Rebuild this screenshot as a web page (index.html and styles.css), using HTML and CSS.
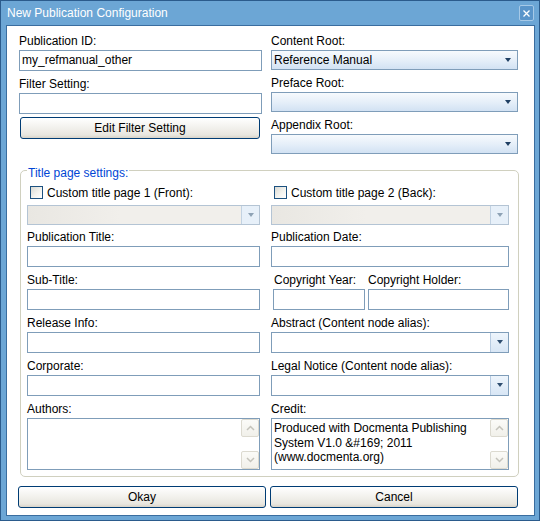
FILE: index.html
```html
<!DOCTYPE html>
<html>
<head>
<meta charset="utf-8">
<title>New Publication Configuration</title>
<link rel="stylesheet" href="styles.css">
</head>
<body>
<div class="window">
  <div class="titlebar">
    <span class="title">New Publication Configuration</span>
    <span class="close"><svg width="7" height="7" viewBox="0 0 7 7"><path d="M0.5 0.5 L6.5 6.5 M6.5 0.5 L0.5 6.5" stroke="#fff" stroke-width="1.3" fill="none"/></svg></span>
  </div>
  <div class="content">
    <div class="top">
      <div class="col">
        <div class="lbl">Publication ID:</div>
        <div class="field">my_refmanual_other</div>
        <div class="lbl">Filter Setting:</div>
        <div class="field"></div>
        <div class="btn edit">Edit Filter Setting</div>
      </div>
      <div class="col">
        <div class="lbl">Content Root:</div>
        <div class="combo blue"><span class="ctext">Reference Manual</span><span class="abtn"><i class="tri"></i></span></div>
        <div class="lbl">Preface Root:</div>
        <div class="combo blue"><span class="ctext"></span><span class="abtn"><i class="tri"></i></span></div>
        <div class="lbl">Appendix Root:</div>
        <div class="combo blue"><span class="ctext"></span><span class="abtn"><i class="tri"></i></span></div>
      </div>
    </div>

    <div class="group">
      <span class="legend">Title page settings:</span>
      <div class="gcols">
        <div class="col">
          <div class="chk"><span class="cbox"></span><span>Custom title page 1 (Front):</span></div>
          <div class="combo dis"><span class="ctext"></span><span class="abtn"><i class="tri"></i></span></div>
          <div class="lbl">Publication Title:</div>
          <div class="field"></div>
          <div class="lbl">Sub-Title:</div>
          <div class="field"></div>
          <div class="lbl">Release Info:</div>
          <div class="field"></div>
          <div class="lbl">Corporate:</div>
          <div class="field"></div>
          <div class="lbl">Authors:</div>
          <div class="tarea">
            <div class="ttext"></div>
            <div class="sbar">
              <span class="sbtn"><svg width="9" height="6" viewBox="0 0 9 6"><polyline points="1,5 4.5,1.5 8,5" fill="none" stroke="#c4c3bb" stroke-width="1.5"/></svg></span>
              <span class="sbtn"><svg width="9" height="6" viewBox="0 0 9 6"><polyline points="1,1 4.5,4.5 8,1" fill="none" stroke="#c4c3bb" stroke-width="1.5"/></svg></span>
            </div>
          </div>
        </div>
        <div class="col">
          <div class="chk"><span class="cbox"></span><span>Custom title page 2 (Back):</span></div>
          <div class="combo dis"><span class="ctext"></span><span class="abtn"><i class="tri"></i></span></div>
          <div class="lbl">Publication Date:</div>
          <div class="field"></div>
          <div class="copy">
            <div class="col">
              <div class="lbl sub">Copyright Year:</div>
              <div class="field"></div>
            </div>
            <div class="col">
              <div class="lbl">Copyright Holder:</div>
              <div class="field"></div>
            </div>
          </div>
          <div class="lbl">Abstract (Content node alias):</div>
          <div class="combo white"><span class="ctext"></span><span class="abtn"><i class="tri"></i></span></div>
          <div class="lbl">Legal Notice (Content node alias):</div>
          <div class="combo white"><span class="ctext"></span><span class="abtn"><i class="tri"></i></span></div>
          <div class="lbl">Credit:</div>
          <div class="tarea">
            <div class="ttext">Produced with Docmenta Publishing System V1.0 &amp;#169; 2011 (www.docmenta.org)</div>
            <div class="sbar">
              <span class="sbtn"><svg width="9" height="6" viewBox="0 0 9 6"><polyline points="1,5 4.5,1.5 8,5" fill="none" stroke="#c4c3bb" stroke-width="1.5"/></svg></span>
              <span class="sbtn"><svg width="9" height="6" viewBox="0 0 9 6"><polyline points="1,1 4.5,4.5 8,1" fill="none" stroke="#c4c3bb" stroke-width="1.5"/></svg></span>
            </div>
          </div>
        </div>
      </div>
    </div>

    <div class="buttons">
      <div class="btn">Okay</div>
      <div class="btn">Cancel</div>
    </div>
  </div>
</div>
</body>
</html>
```

FILE: styles.css
```css
* { box-sizing: border-box; }
html, body { margin: 0; padding: 0; background: #fff; }
body {
  font-family: "Liberation Sans", Arial, sans-serif;
  font-size: 12px;
  color: #000;
}
.window {
  width: 540px;
  height: 521px;
  border: 1px solid #2b5b8c;
  background: #6ca6d5;
  display: flex;
  flex-direction: column;
}
.titlebar {
  height: 24px;
  flex: none;
  display: flex;
  align-items: center;
  padding: 0 5px 0 6px;
  color: #fff;
}
.title { flex: 1; line-height: 24px; white-space: nowrap; }
.close {
  width: 15px;
  height: 16px;
  border: 1px solid #a6c9e7;
  border-radius: 2px;
  background: #5a95ca;
  display: flex;
  align-items: center;
  justify-content: center;
}
.content {
  flex: 1;
  margin: 0 4px 4px 5px;
  border: 1px solid #3a6d9f;
  background: #fff;
  padding: 8px 16px 0 12px;
}
.top {
  display: grid;
  grid-template-columns: 243px 1fr;
  column-gap: 9px;
}
.col { display: flex; flex-direction: column; min-width: 0; }
.lbl {
  height: 14px;
  line-height: 14px;
  margin-bottom: 2px;
  white-space: nowrap;
}
.lbl.sub { padding-left: 1px; }
.field {
  height: 21px;
  border: 1px solid #7f9db9;
  background: #fff;
  padding: 0 2px;
  line-height: 19px;
  margin-bottom: 6px;
  white-space: nowrap;
}
.btn {
  height: 22px;
  border: 1px solid #003c74;
  border-radius: 3px;
  background: linear-gradient(#ffffff, #f3f2ee 45%, #e8e6df 85%, #d8d3c8);
  text-align: center;
  line-height: 20px;
}
.btn.edit { margin: -3px 2px 0 1px; }

.combo {
  display: flex;
  height: 20px;
  border: 1px solid #7f9db9;
  margin-bottom: 6px;
}
.ctext { flex: 1; padding-left: 2px; line-height: 18px; white-space: nowrap; }
.abtn {
  width: 18px;
  flex: none;
  display: flex;
  align-items: center;
  justify-content: center;
}
.tri {
  width: 0;
  height: 0;
  border-left: 3.5px solid transparent;
  border-right: 3.5px solid transparent;
  border-top: 4px solid #1f3f63;
  margin-top: -1px;
}
.combo.blue { background: linear-gradient(#f7fafd, #e6eff9 50%, #d2e2f3); }
.combo.white { height: 21px; background: #fff; }
.combo.white .abtn {
  background: linear-gradient(#eef5fc, #d8e6f5);
  border-left: 1px solid #b7cbe1;
}
.combo.white .tri { border-top-color: #2f4e70; }
.combo.dis {
  border-color: #b4c4d4;
  background: linear-gradient(90deg, #e9e7e2, #f1efeb 40%);
  margin-bottom: 5px;
}
.combo.dis .abtn {
  background: #e7f0f9;
  border-left: 1px solid #c2d2e2;
}
.combo.dis .tri { border-top-color: #8ea2b5; }

.group {
  position: relative;
  margin: 10px -1px 0 1px;
  border: 1px solid #d0d0bf;
  border-radius: 5px;
  padding: 15px 9px 6px 6px;
}
.legend {
  position: absolute;
  top: -5px;
  left: 6px;
  padding: 0 1px;
  background: #fff;
  color: #0046d5;
  line-height: 14px;
  white-space: nowrap;
}
.gcols {
  display: grid;
  grid-template-columns: 233px 1fr;
  column-gap: 11px;
}
.chk {
  display: flex;
  align-items: flex-start;
  height: 15px;
  line-height: 15px;
  margin-bottom: 4px;
  white-space: nowrap;
}
.cbox {
  width: 13px;
  height: 13px;
  flex: none;
  border: 1px solid #1c5180;
  background: linear-gradient(135deg, #d9d9d3, #f3f3ef 55%, #ffffff);
  margin: 0 4px 0 3px;
}
.copy {
  display: grid;
  grid-template-columns: 92px 1fr;
  column-gap: 3px;
  padding-left: 2px;
}
.tarea {
  display: flex;
  height: 52px;
  border: 1px solid #7f9db9;
  background: #fff;
}
.ttext {
  flex: 1;
  padding: 2px 4px 0 2px;
  line-height: 14.5px;
}
.sbar {
  width: 18px;
  flex: none;
  display: flex;
  flex-direction: column;
  justify-content: space-between;
}
.sbtn {
  height: 18px;
  border: 1px solid #dcdad0;
  border-radius: 2px;
  background: linear-gradient(#fbfbf8, #f1f0ea);
  display: flex;
  align-items: center;
  justify-content: center;
}
.buttons {
  display: grid;
  grid-template-columns: 248px 248px;
  column-gap: 4px;
  margin: 9px 0 0 -1px;
}
```
